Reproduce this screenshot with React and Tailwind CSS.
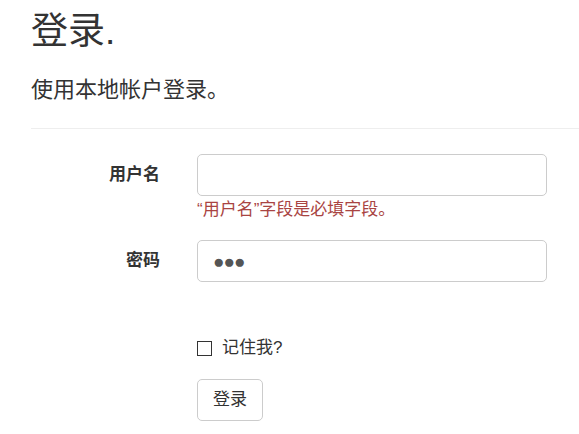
export default function App() {
  const font = { fontFamily: '"Liberation Sans", "Noto Sans CJK SC", sans-serif' };
  return (
    <div className="min-h-[434px] bg-white pl-[31px] pt-[12px] text-[#333]" style={font}>
      <h2 className="h-[40px] text-[37px] font-normal leading-[40px]">登录.</h2>
      <h4 className="mt-[26px] text-[22px] font-normal leading-[24px]">使用本地帐户登录。</h4>
      <hr className="mt-[26px] border-0 border-t border-[#eee]" />
      <div className="mt-[25px] flex">
        <label className="flex h-[42px] w-[129px] items-center justify-end text-[17px] font-bold">用户名</label>
        <div className="ml-[37px] flex flex-col">
          <input
            type="text"
            className="h-[42px] w-[350px] rounded-[5px] border border-[#ccc] px-[15px] text-[17px] text-[#555] outline-none"
          />
          <span className="mt-[2px] text-[17px] leading-[24px] text-[#a94442]">“用户名”字段是必填字段。</span>
        </div>
      </div>
      <div className="mt-[18px] flex">
        <label className="flex h-[42px] w-[129px] items-center justify-end text-[17px] font-bold">密码</label>
        <div className="ml-[37px] flex h-[42px] w-[350px] items-center rounded-[5px] border border-[#ccc] pl-[15px] text-[#555]">
          <span className="text-[19px] leading-none tracking-[-1px]">●●●</span>
        </div>
      </div>
      <div className="ml-[166px] mt-[54px] flex h-[24px] items-center">
        <span className="h-[15px] w-[15px] border border-[#333]" />
        <label className="ml-[10px] text-[17px] leading-[24px]">记住我?</label>
      </div>
      <button className="ml-[166px] mt-[19px] h-[42px] w-[66px] rounded-[5px] border border-[#ccc] bg-white text-[17px] text-[#333]">
        登录
      </button>
    </div>
  );
}
